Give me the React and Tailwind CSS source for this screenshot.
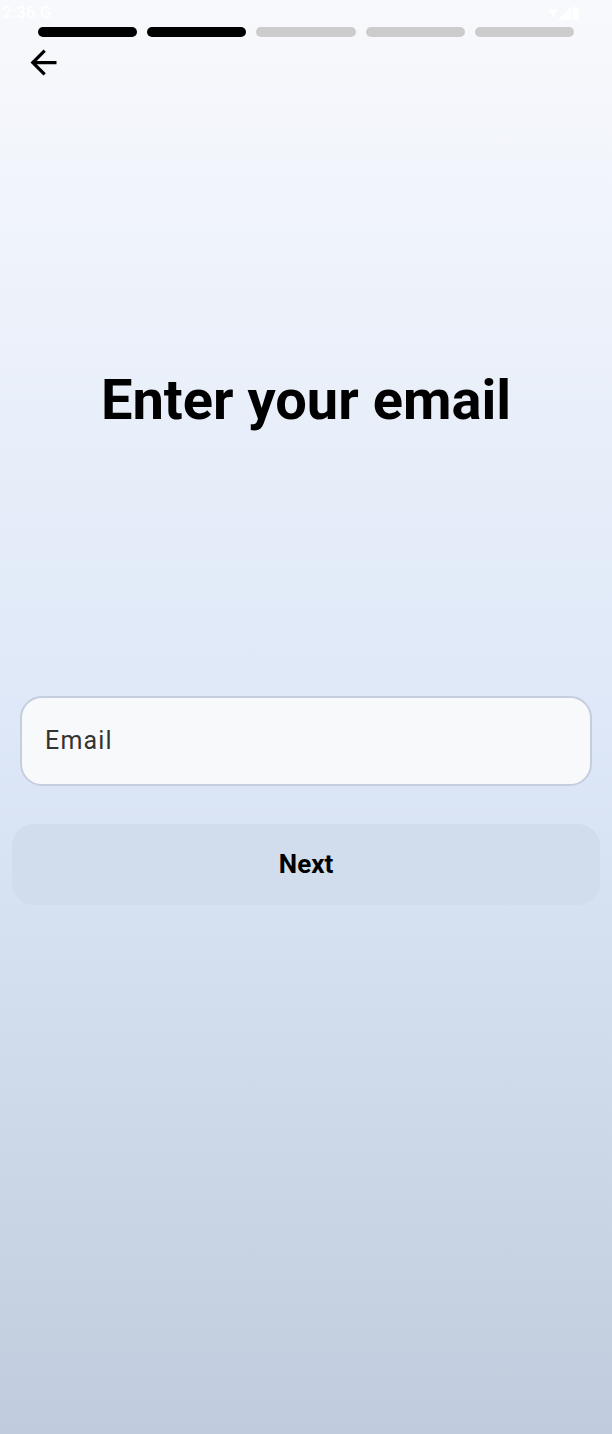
const steps = [true, true, false, false, false];

function BackArrow() {
  return (
    <svg width="39" height="39" viewBox="0 0 24 24" fill="black">
      <path d="M20 11H7.83l5.59-5.59L12 4l-8 8 8 8 1.41-1.41L7.83 13H20v-2z" />
    </svg>
  );
}

export default function App() {
  return (
    <div
      className="w-[612px] h-[1434px] flex flex-col bg-gradient-to-b from-[#f8f9fc] via-[#dee8f8] to-[#c0ccdd]"
      style={{ fontFamily: "Roboto, 'Liberation Sans', sans-serif" }}
    >
      {/* status bar, white on white */}
      <div className="h-[26px] flex items-center justify-between px-[2px] text-white text-[17px]">
        <span className="font-medium">2:36 G</span>
        <span className="pr-[30px]">▾◢▮</span>
      </div>

      <div className="flex gap-[10px] px-[38px] pt-[1px]">
        {steps.map((done, i) => (
          <div
            key={i}
            className={`flex-1 h-[10px] rounded-full ${done ? "bg-black" : "bg-[#cccccc]"}`}
          />
        ))}
      </div>

      <div className="pl-[24px] pt-[6px]">
        <BackArrow />
      </div>

      <h1 className="mt-[290px] text-center text-[56px] font-bold text-black leading-none">
        Enter your email
      </h1>

      <div className="mt-[268px] px-[20px]">
        <div className="h-[90px] flex items-center px-[23px] rounded-[22px] border-2 border-[#c4cedf] bg-[#f8f9fb]">
          <span className="text-[25px] text-[#333] tracking-[1.2px]">Email</span>
        </div>
      </div>

      <div className="mt-[38px] px-[12px]">
        <button className="w-full h-[81px] rounded-[22px] bg-[#d1ddec] text-[26px] font-bold text-black">
          Next
        </button>
      </div>
    </div>
  );
}
